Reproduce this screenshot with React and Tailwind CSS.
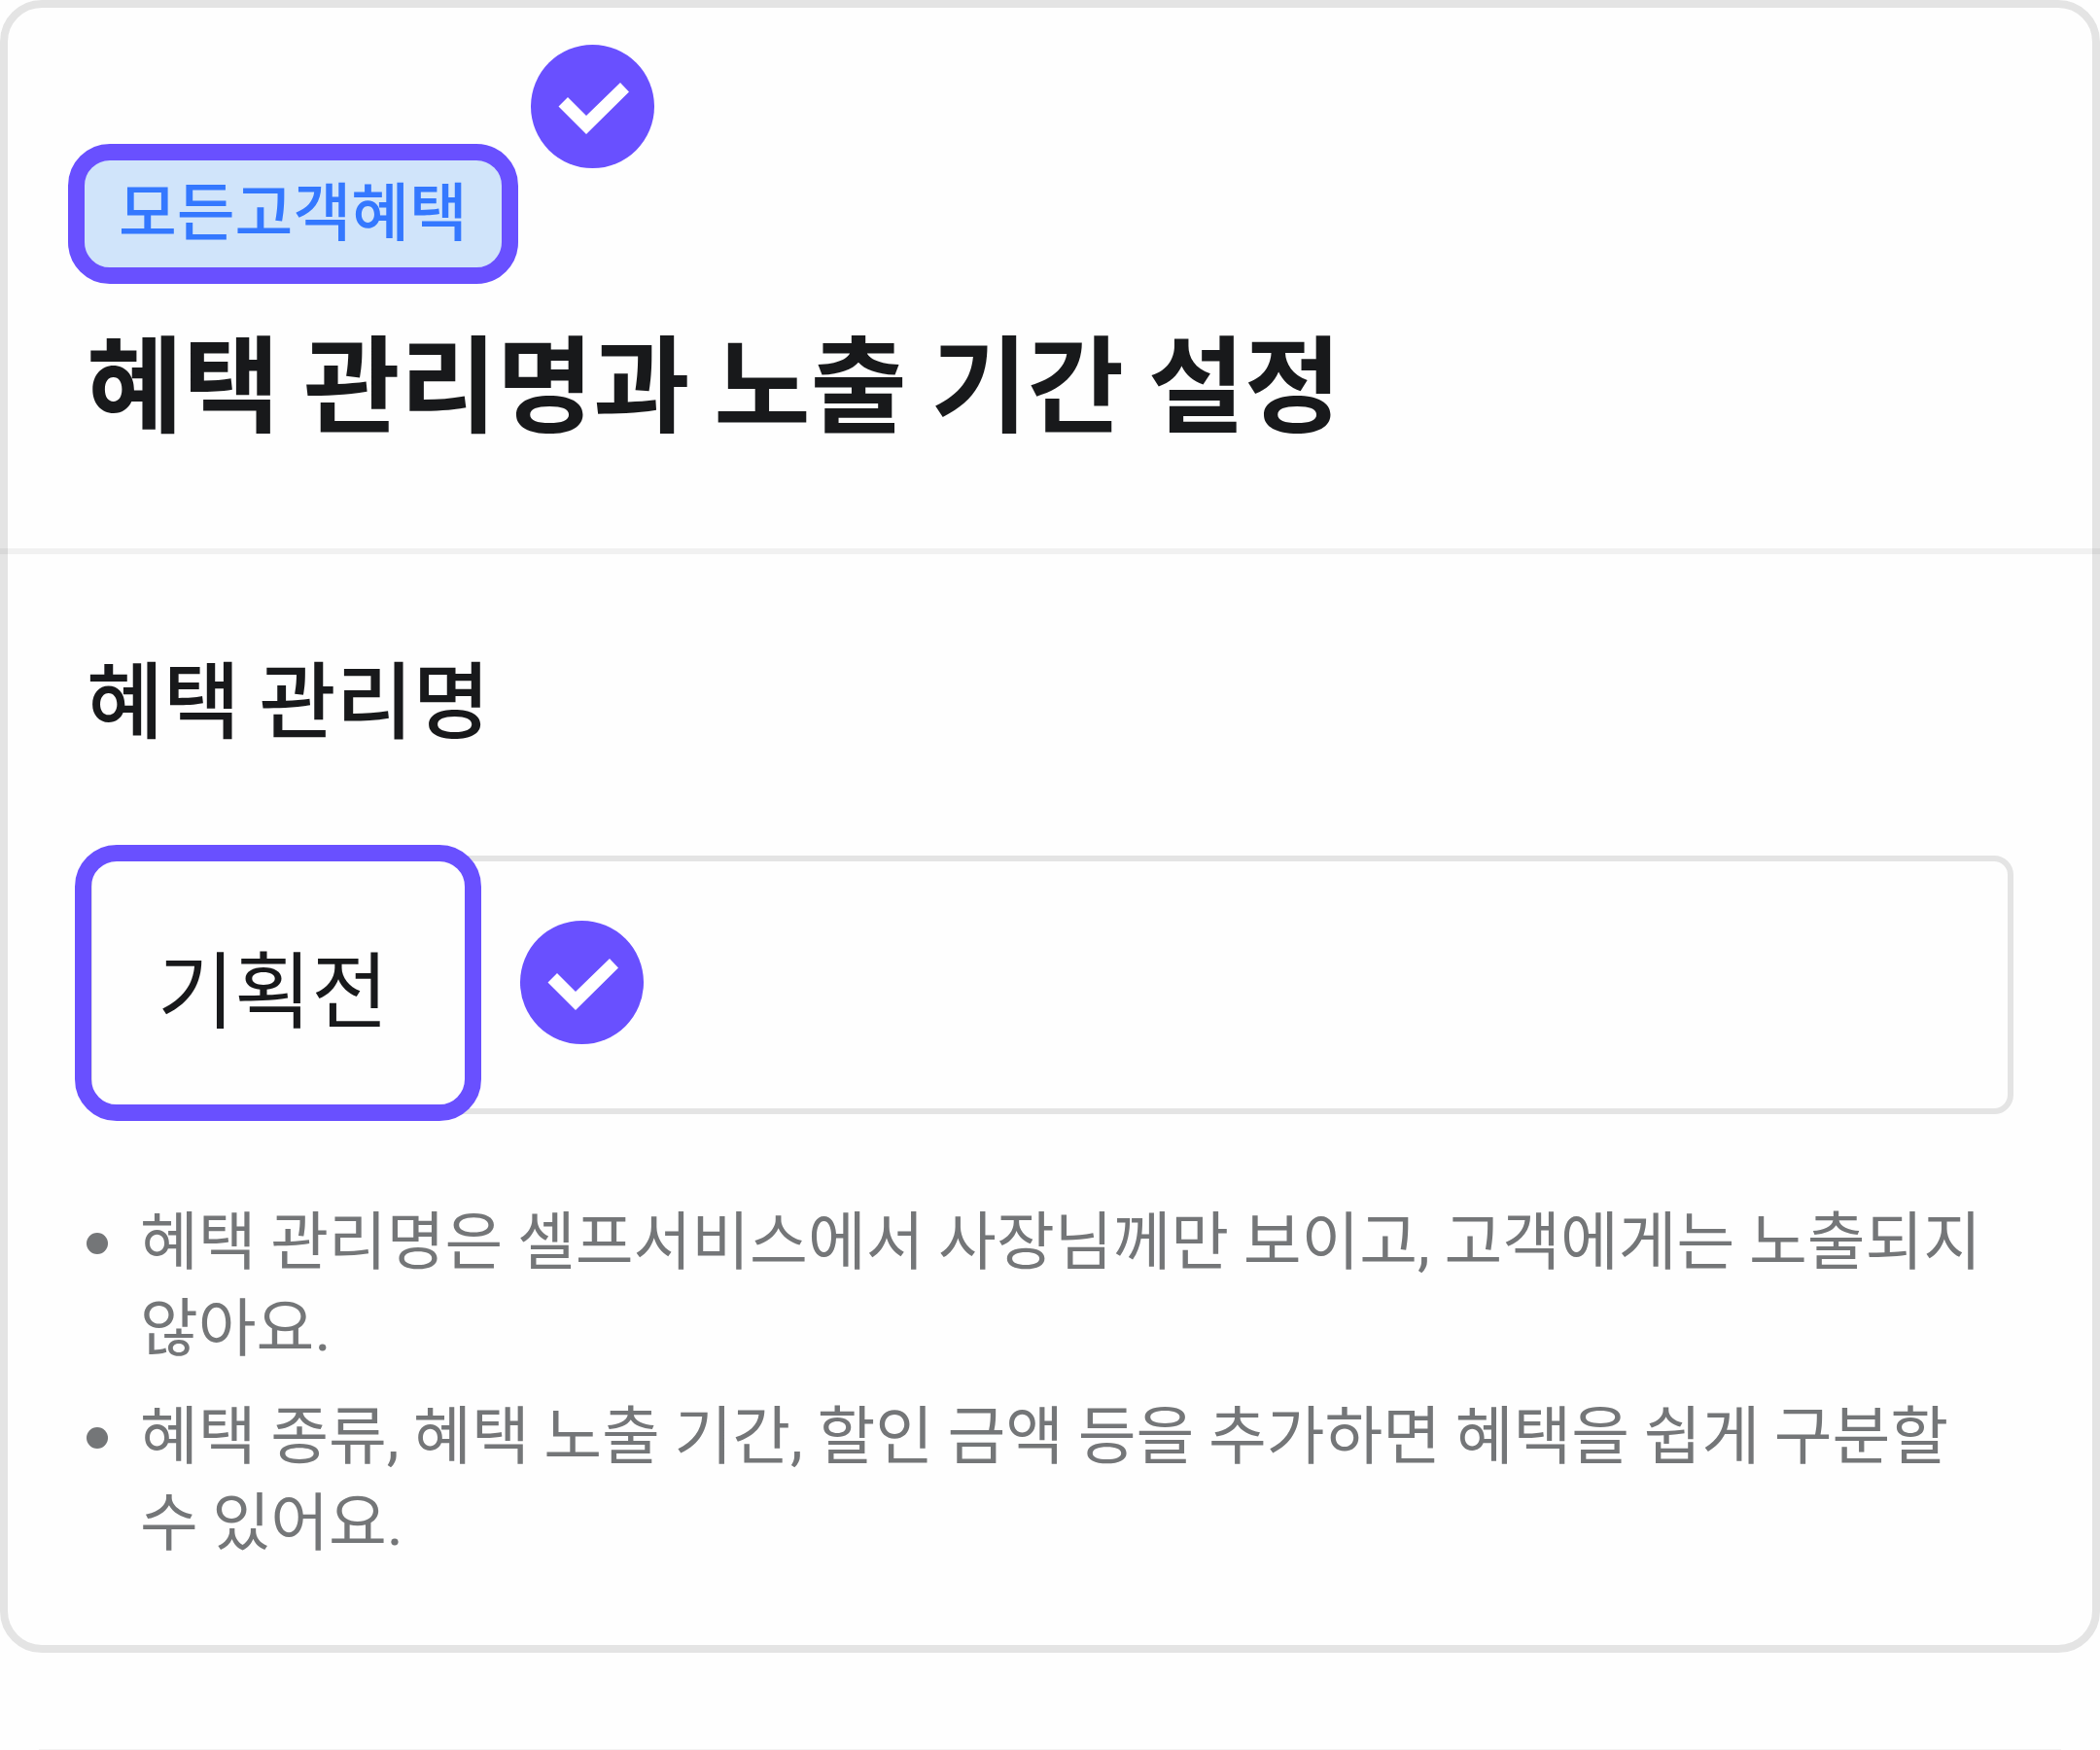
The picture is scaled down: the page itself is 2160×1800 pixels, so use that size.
function CheckBadge({ className = "" }) {
  return (
    <svg
      viewBox="0 0 127 127"
      className={`h-[127px] w-[127px] shrink-0 ${className}`}
      aria-hidden="true"
    >
      <circle cx="63.5" cy="63.5" r="63.5" fill="#6950ff" />
      <path d="M28.5 63.5 38 54 57 73 92 39 101 48.5 57 92Z" fill="#fff" />
    </svg>
  );
}

const notes = [
  "혜택 관리명은 셀프서비스에서 사장님께만 보이고, 고객에게는 노출되지 않아요.",
  "혜택 종류, 혜택 노출 기간, 할인 금액 등을 추가하면 혜택을 쉽게 구분할 수 있어요.",
];

// Sets commas and periods in a Latin face beside the Korean text.
function KoreanText({ text }) {
  return text.split(/([,.])/).map((part, i) =>
    part === "," || part === "." ? (
      <span key={i} className="font-['Roboto',sans-serif] leading-none">
        {part}
      </span>
    ) : (
      part
    )
  );
}

export default function App() {
  return (
    <main className="min-h-screen bg-[#fefefe] font-['Noto_Sans_CJK_KR',sans-serif] text-[#18191b]">
      <section className="rounded-[43px] border-8 border-[#e4e4e4]">
        <header className="pt-[38px]">
          <div className="ml-[62px] flex items-start gap-[13px]">
            <span className="mt-[102px] flex h-[144px] items-center rounded-[43px] border-[17px] border-[#6950ff] bg-[#d0e4fa] px-[35px] pb-[13px] text-[65px] leading-[88px] font-medium text-[#3478ff]">
              모든고객혜택
            </span>
            <CheckBadge />
          </div>
          <h1 className="mt-[32px] ml-[81px] text-[108px] leading-[130px] font-bold">
            혜택 관리명과 노출 기간 설정
          </h1>
          <hr className="-mx-2 mt-[110px] h-[6px] border-0 bg-black/5" />
        </header>

        <div className="px-[81px] pt-[94px] pb-[86px]">
          <label
            htmlFor="benefit-name"
            className="block text-[86px] leading-[104px] font-medium"
          >
            혜택 관리명
          </label>
          <div className="relative mt-[112px]">
            <input
              id="benefit-name"
              type="text"
              defaultValue="기획전"
              className="block h-[266px] w-full rounded-[20px] border-[6px] border-[#e4e4e4] bg-transparent px-[67px] text-[86px] outline-none"
            />
            <span className="pointer-events-none absolute -top-[11px] -left-[12px] h-[284px] w-[418px] rounded-[43px] border-[17px] border-[#6950ff]" />
            <CheckBadge className="pointer-events-none absolute top-[67px] left-[446px]" />
          </div>

          <ul className="mt-[82px] flex flex-col gap-[22px] text-[65px] leading-[89px] text-[#747678]">
            {notes.map((note) => (
              <li key={note} className="flex items-start gap-[33px]">
                <span className="mt-[40px] h-[22px] w-[22px] shrink-0 rounded-full bg-[#747678]" />
                <p className="break-keep">
                  <KoreanText text={note} />
                </p>
              </li>
            ))}
          </ul>
        </div>
      </section>
      <hr className="mx-10 mt-[99px] h-px border-0 bg-[#f3f3f3]" />
    </main>
  );
}
